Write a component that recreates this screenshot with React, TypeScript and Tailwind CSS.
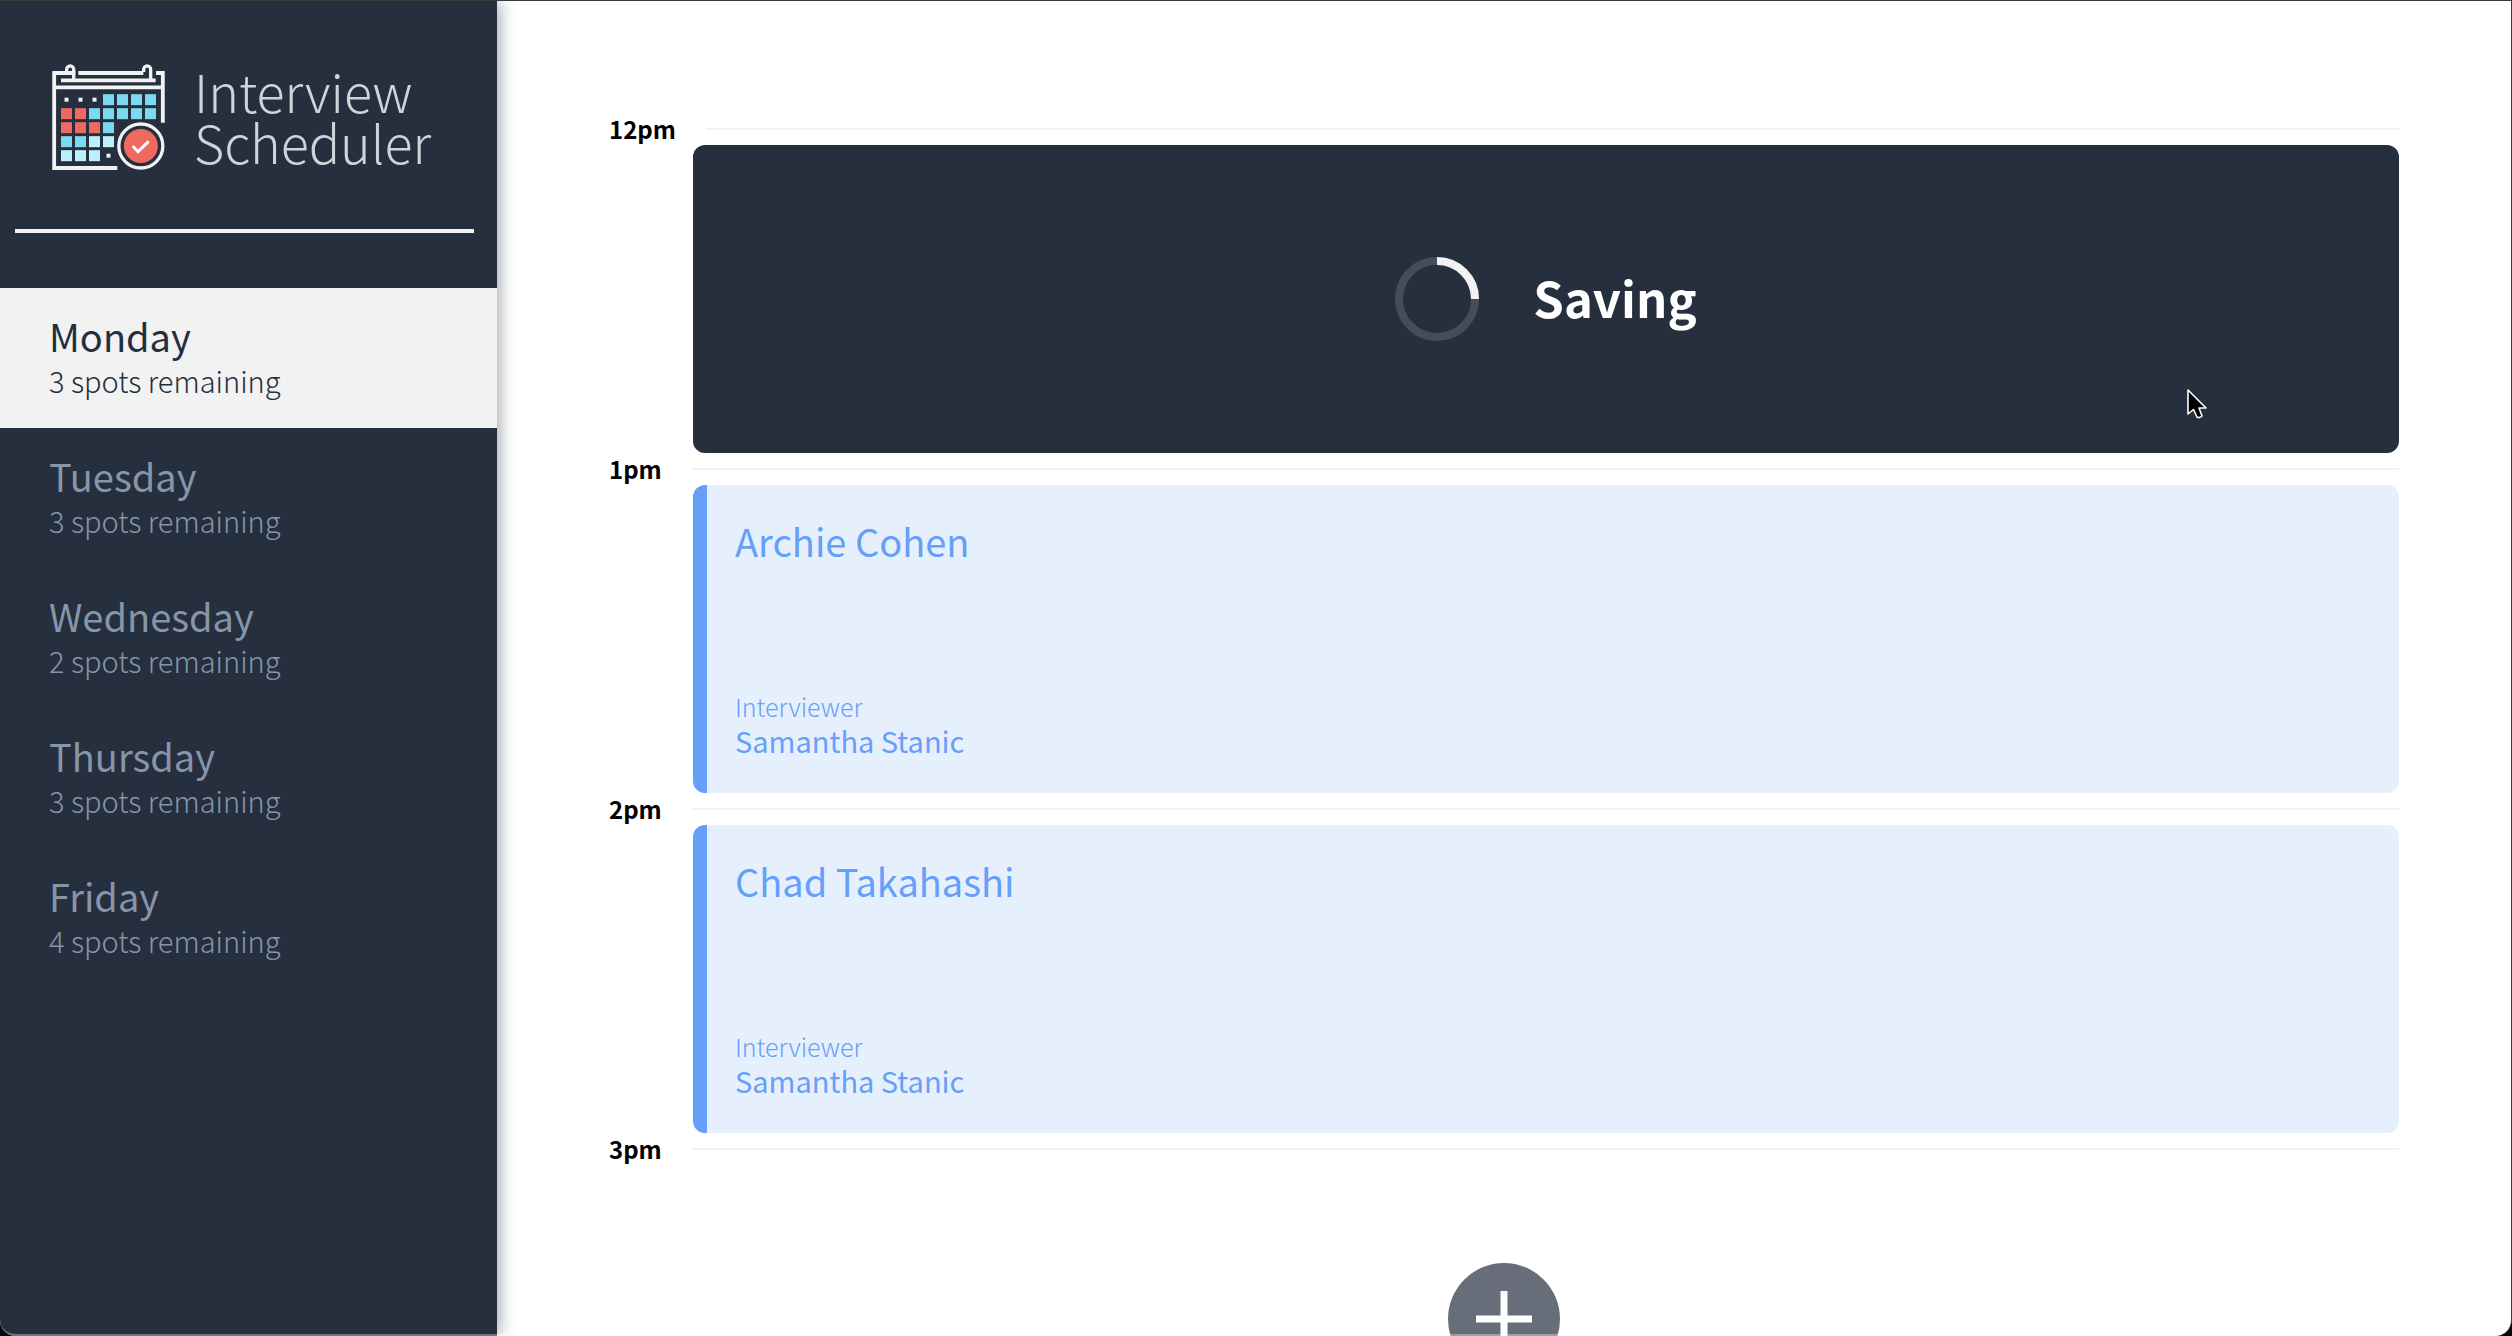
const days = [
  { name: "Monday", spots: 3, selected: true },
  { name: "Tuesday", spots: 3, selected: false },
  { name: "Wednesday", spots: 2, selected: false },
  { name: "Thursday", spots: 3, selected: false },
  { name: "Friday", spots: 4, selected: false },
];

const BLUE = "#7bd9f0";
const RED = "#ef6961";
const PALE = "#bcf1fb";

/* Calendar cells, row by row; null marks a small dot and "" an empty place. */
const cells: (string | null)[][] = [
  [null, null, null, BLUE, BLUE, BLUE, BLUE],
  [RED, RED, BLUE, BLUE, BLUE, BLUE, BLUE],
  [RED, RED, RED, BLUE, "", "", ""],
  [BLUE, BLUE, PALE, PALE, "", "", ""],
  [PALE, PALE, PALE, null, "", "", ""],
];

function CalendarLogo() {
  return (
    <svg width="116" height="108" viewBox="150 189 348 324" fill="none" aria-hidden="true" className="shrink-0">
      <g stroke="#f2f2f2" strokeWidth="11.5">
        <path d="M226 219H162.500V504H352" />
        <path d="M235 219H430M468 219H488.500V368M183 241H467M162 262H489" />
        <path d="M200 216V208a10.500 10.500 0 0 1 21 0V238M431 216V208a10.500 10.500 0 0 1 21 0V238" strokeWidth="10" />
      </g>
      {cells.map((row, r) =>
        row.map((color, c) => {
          if (color === "") return null;
          const x = 183 + c * 42;
          const y = 282.500 + r * 42;
          return color === null ? (
            <rect key={`${r}-${c}`} x={x + 10.500} y={y + 10.500} width="12" height="12" fill="#f2f2f2" />
          ) : (
            <rect key={`${r}-${c}`} x={x} y={y} width="33" height="33" fill={color} />
          );
        }),
      )}
      <circle cx="422.500" cy="438" r="66" stroke="#f2f2f2" strokeWidth="10" />
      <circle cx="422.500" cy="438" r="51" fill={RED} />
      <path d="M398 438l16 17 32-31" stroke="#fff" strokeWidth="9" />
    </svg>
  );
}

function Cursor() {
  return (
    <svg width="22" height="34" viewBox="0 0 22 34" aria-hidden="true" className="absolute top-[242px] right-[191px]">
      <path
        d="M2 3V27L7.500 22.500L11 30Q13.500 31.500 16 29L13 21H20Z"
        fill="#000"
        stroke="#fff"
        strokeWidth="1.600"
        strokeLinejoin="round"
      />
    </svg>
  );
}

function TimeHeader({ time }: { time: string }) {
  return (
    <header className="flex h-8 items-center">
      <h4 className="min-w-[82px] pr-[30px] text-[24px] leading-[34px] font-bold text-black">{time}</h4>
      <hr className="h-[2px] flex-1 border-0 bg-[#f2f2f2]" />
    </header>
  );
}

function Saving() {
  return (
    <div className="relative ml-[84px] flex h-[308px] items-center justify-center gap-[54px] rounded-xl bg-[#262f3e]">
      <svg width="84" height="84" viewBox="0 0 84 84" fill="none" role="img" aria-label="Loading">
        <circle cx="42" cy="42" r="38" stroke="#454d5a" strokeWidth="8" />
        <path d="M42 4A38 38 0 0 1 80 42" stroke="#f2f2f2" strokeWidth="8" />
      </svg>
      <h1 className="pb-1 text-[49px] leading-[60px] font-bold text-white">Saving</h1>
      <Cursor />
    </div>
  );
}

function Appointment({ student, interviewer }: { student: string; interviewer: string }) {
  return (
    <section className="ml-[84px] flex h-[308px] flex-col justify-between rounded-xl border-l-14 border-[#669ffa] bg-[#e6f0fd] pt-[36px] pb-[36px] pl-7 text-[#669ffa]">
      <h2 className="text-[38px] leading-[40px]">{student}</h2>
      <div>
        <h4 className="text-[25px] leading-[34px] font-light">Interviewer</h4>
        <h3 className="text-[29px] leading-[34px]">{interviewer}</h3>
      </div>
    </section>
  );
}

export default function App() {
  return (
    <div className="h-screen bg-[#05080c]">
      <main
        className="relative flex h-full overflow-hidden rounded-b-2xl border-t border-r border-[#3a3a3a] bg-white"
        style={{ fontFamily: '"Noto Sans CJK SC", "Noto Sans", sans-serif' }}
      >
        <aside className="z-10 w-[497px] shrink-0 bg-[#262f3e] shadow-[2px_0_16px_rgba(34,47,62,0.45)]">
          <div className="flex h-[228px] items-start pt-[62px] pl-[50px]">
            <CalendarLogo />
            <div className="pt-0.5 pl-[28px] text-[52px] leading-[51px] font-light text-[#d0d3d7]">
              <p>Interview</p>
              <p>Scheduler</p>
            </div>
          </div>
          <hr className="mr-[23px] ml-[15px] h-1 border-0 bg-[#f2f2f2]" />
          <nav className="pt-[55px]">
            <ul>
              {days.map((day) => (
                <li key={day.name}>
                  <button
                    type="button"
                    aria-pressed={day.selected}
                    className={
                      day.selected
                        ? "block w-full bg-[#f2f2f2] py-[26px] pl-[49px] text-left text-[#222f3e]"
                        : "block w-full py-[26px] pl-[49px] text-left text-[#8795a8]"
                    }
                  >
                    <span className="block text-[38px] leading-[44px]">{day.name}</span>
                    <span className="block text-[29px] leading-[44px] font-light">{day.spots} spots remaining</span>
                  </button>
                </li>
              ))}
            </ul>
          </nav>
        </aside>
        <section className="min-w-0 flex-1 px-28 pt-28">
          <TimeHeader time="12pm" />
          <Saving />
          <TimeHeader time="1pm" />
          <Appointment student="Archie Cohen" interviewer="Samantha Stanic" />
          <TimeHeader time="2pm" />
          <Appointment student="Chad Takahashi" interviewer="Samantha Stanic" />
          <TimeHeader time="3pm" />
          <div className="flex h-[308px] items-center justify-center">
            <button type="button" aria-label="Add" className="flex size-28 items-center justify-center rounded-full bg-[#676e79]">
              <svg width="56" height="56" viewBox="0 0 56 56" stroke="#fff" strokeWidth="7" aria-hidden="true">
                <path d="M28 0V56M0 28H56" />
              </svg>
            </button>
          </div>
        </section>
        <div className="pointer-events-none absolute inset-0 z-20 rounded-b-2xl border-b-2 border-white/35" />
      </main>
    </div>
  );
}
